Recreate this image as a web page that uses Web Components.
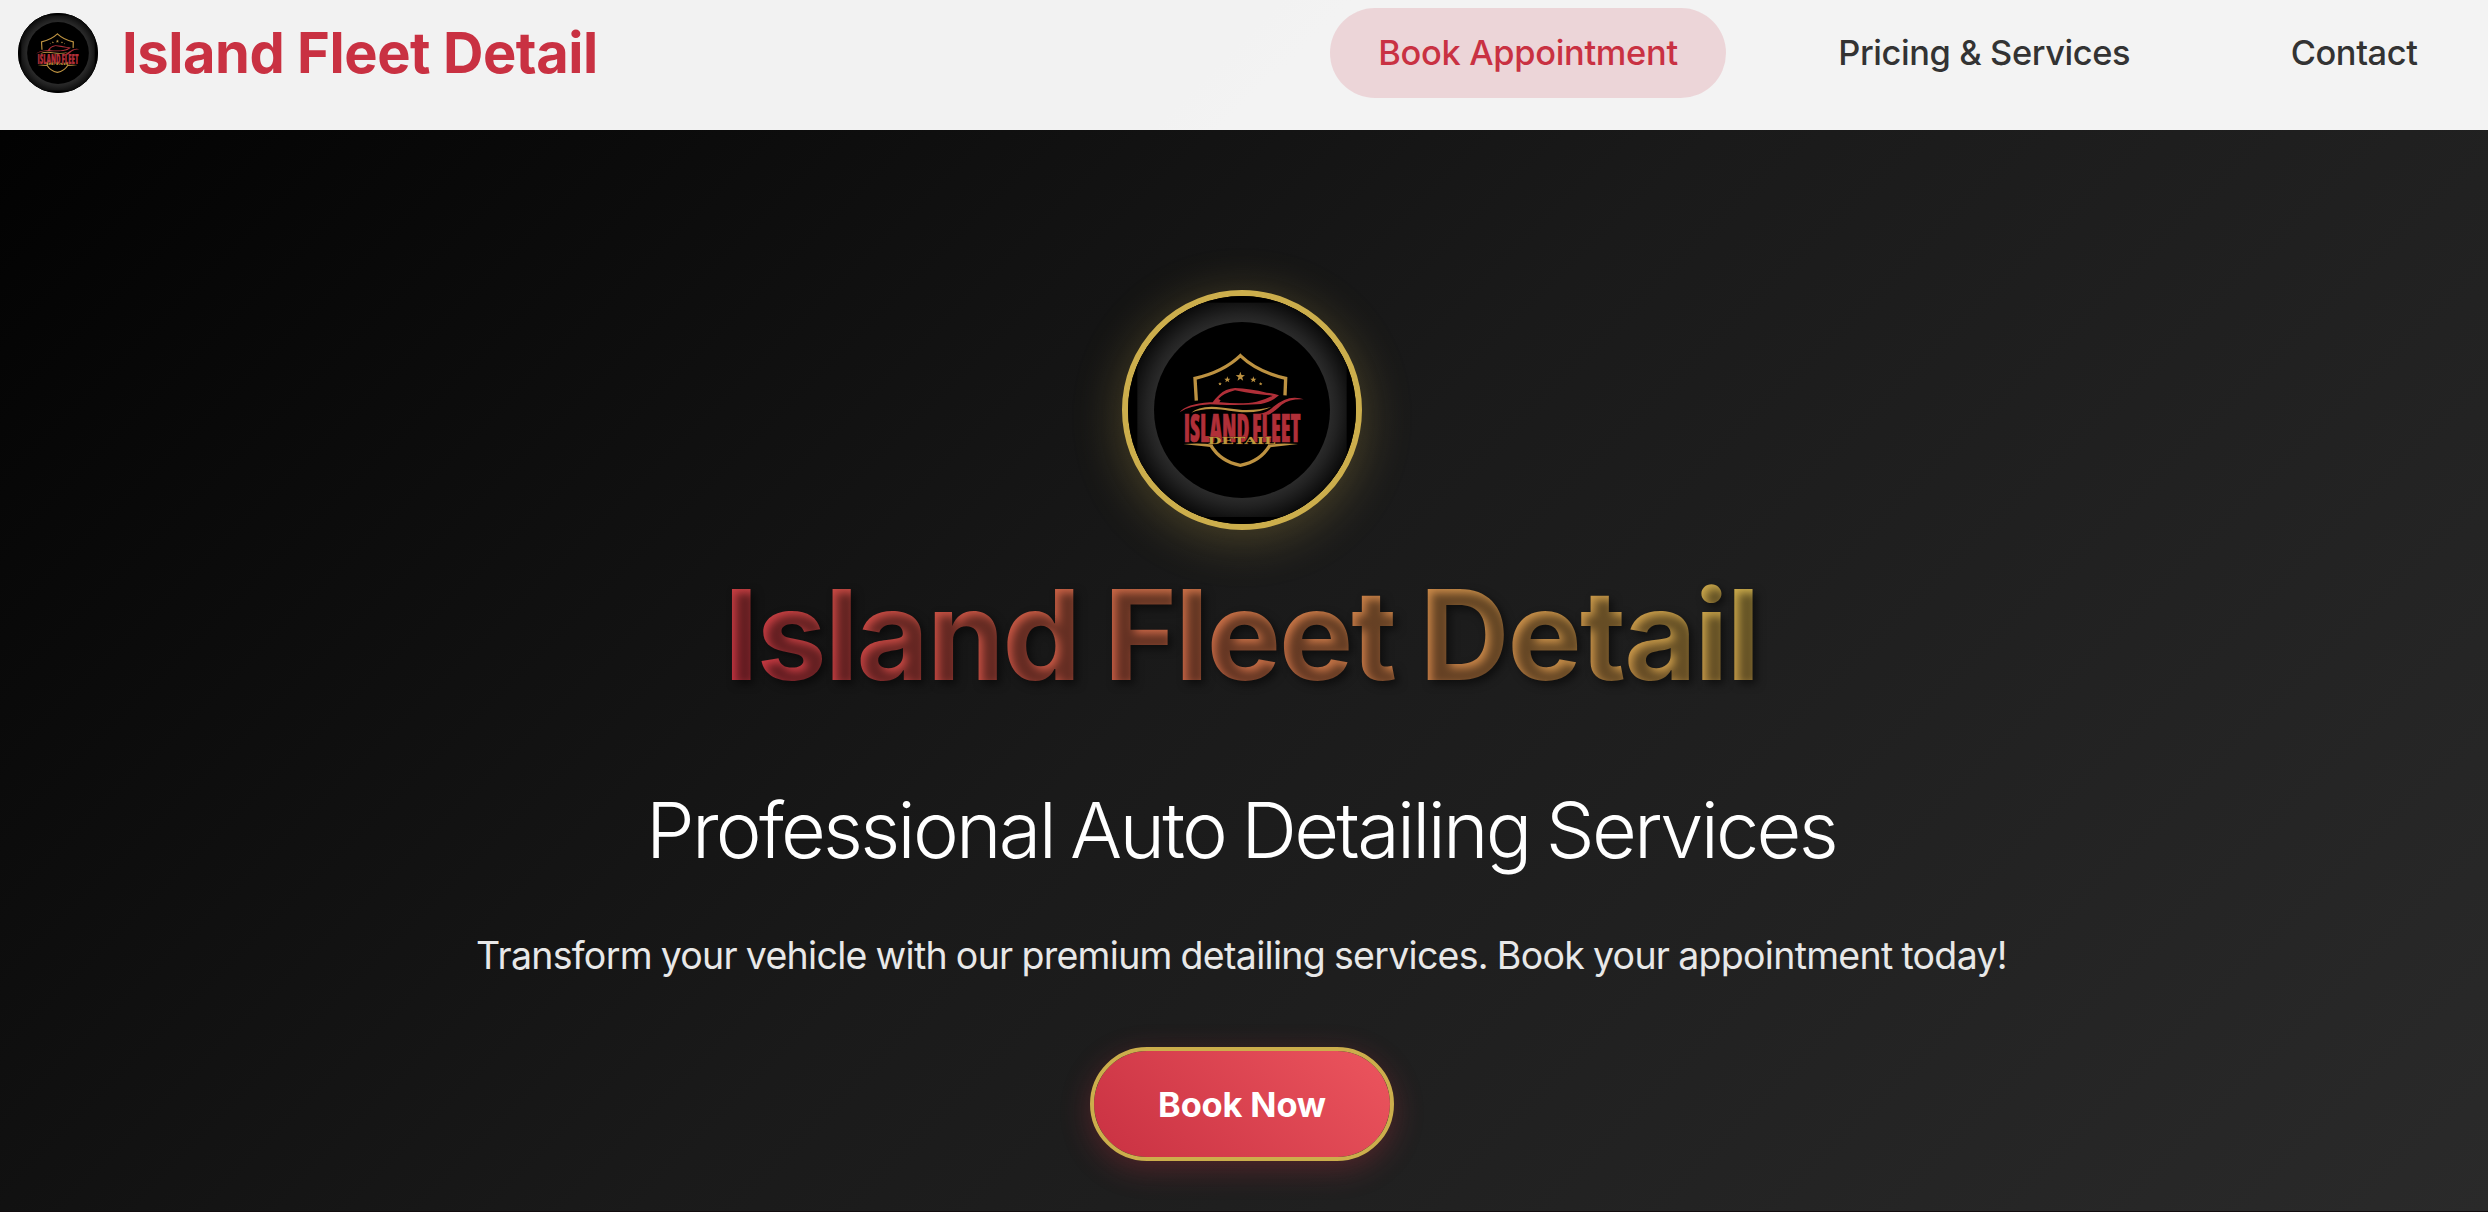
<!DOCTYPE html>
<html lang="en">
<head>
<meta charset="utf-8">
<title>Island Fleet Detail</title>
<style>
  html, body { margin: 0; height: 100%; overflow: hidden; }
  body { font-family: Inter, "Liberation Sans", sans-serif; background: #000; }
</style>
</head>
<body>
<fleet-page></fleet-page>
<script>
const define = (name, html) => {
  const template = document.createElement('template');
  template.innerHTML = html;
  customElements.define(name, class extends HTMLElement {
    constructor() {
      super();
      this.attachShadow({ mode: 'open' }).append(template.content.cloneNode(true));
    }
  });
};

define('fleet-emblem', `
<style>
  :host { display: block; box-sizing: border-box; border-radius: 50%; overflow: hidden; background: #000; flex: none; }
  svg { display: block; width: 100%; height: 100%; }
  .wordmark { font-family: "Open Sans", "Noto Sans", sans-serif; font-weight: 800; font-stretch: 75%; font-size: 115px; }
</style>
<svg viewBox="84 78 684 684">
  <defs>
    <radialGradient id="ring" gradientUnits="userSpaceOnUse" cx="426" cy="420" r="364">
      <stop offset="0.72" stop-color="#2b2b2b"/>
      <stop offset="0.79" stop-color="#222"/>
      <stop offset="0.92" stop-color="#0d0d0d"/>
      <stop offset="1" stop-color="#000"/>
    </radialGradient>
  </defs>
  <rect x="84" y="78" width="684" height="684" fill="#000"/>
  <rect x="112" y="98" width="628" height="643" fill="url(#ring)"/>
  <circle cx="426" cy="420" r="264" fill="#000"/>
  <g fill="none" stroke="#bd9241" stroke-width="10">
    <path d="M289 392 L285 325 Q370 306 421 257 Q472 306 557 325 L555 376"/>
    <path d="M333 527 Q362 575 421 586 Q480 575 509 527"/>
  </g>
  <g fill="#bd9241">
    <path d="M250 522 Q300 519 338 523 L338 532 Q300 528 250 522Z"/>
    <path d="M594 522 Q544 519 504 523 L504 532 Q544 528 594 522Z"/>
    <path d="M421 305 L424.500 315 L435 315.500 L426.700 322 L429.500 332 L421 326 L412.500 332 L415.300 322 L407 315.500 L417.500 315Z"/>
    <path d="M382 319 L384.500 326 L391 326.500 L386 330.500 L388 337 L382 333 L376 337 L378 330.500 L373 326.500 L379.500 326Z"/>
    <path d="M460 319 L462.500 326 L469 326.500 L464 330.500 L466 337 L460 333 L454 337 L456 330.500 L451 326.500 L457.500 326Z"/>
    <path d="M360 336 l1.500 3.500 l3.500 .5 l-2.500 2.500 l1 3.500 l-3.500 -2 l-3.500 2 l1 -3.500 l-2.500 -2.500 l3.500 -.5Z"/>
    <path d="M482 336 l1.500 3.500 l3.500 .5 l-2.500 2.500 l1 3.500 l-3.500 -2 l-3.500 2 l1 -3.500 l-2.500 -2.500 l3.500 -.5Z"/>
    <path d="M274 428 Q292 411 335 410 C375 411 405 420 440 420 Q480 420 514 411 Q482 427 440 427 C400 427 375 417 335 417 Q300 417 274 428Z"/>
  </g>
  <g fill="#b02f38">
    <path d="M239 427 Q258 402 330 397 Q350 396 362 397 Q430 403 470 395 Q495 389 518 377 Q470 374 405 361 Q370 370 355 387 L362 391 L358 397 L338 397 Q344 387 358 374 Q376 356 405 354 Q450 356 500 368 Q520 370 537 376 Q510 400 470 403 Q410 406 362 404 L330 403 Q265 407 239 427Z"/>
    <path d="M478 432 Q505 426 520 410 Q555 382 585 383 Q600 384 611 388 Q570 386 545 404 Q520 428 505 434Z"/>
    <g class="wordmark" stroke="#b02f38" stroke-width="2">
      <text x="251" y="515" textLength="197" lengthAdjust="spacingAndGlyphs">ISLAND</text>
      <text x="456" y="515" textLength="146" lengthAdjust="spacingAndGlyphs">FLEET</text>
    </g>
  </g>
  <text x="323" y="521" textLength="203" lengthAdjust="spacingAndGlyphs" font-family="'DejaVu Serif', serif" font-weight="700" font-size="27" fill="#c09a3c" stroke="#4a2512" stroke-width="1" paint-order="stroke">DETAIL</text>
</svg>`);

define('nav-link', `
<style>
  :host { display: block; padding: 0 48.500px; height: 90px; line-height: 90px; border-radius: 50px;
    font-size: 34.4px; font-weight: 500; letter-spacing: -0.4px; color: #333; white-space: nowrap; }
  :host([active]) { background: rgba(201, 49, 66, .15); color: #c93142; letter-spacing: -0.3px; }
</style>
<slot></slot>`);

define('site-header', `
<style>
  :host { display: flex; align-items: center; justify-content: space-between; box-sizing: border-box;
    height: 130px; padding: 0 22px 24px 18px; background: rgba(255, 255, 255, .95); }
  .brand { display: flex; align-items: center; gap: 24px; }
  fleet-emblem { width: 80px; height: 80px; }
  .name { font-size: 56px; font-weight: 700; letter-spacing: -0.444px; line-height: 70px; color: #c93142; white-space: nowrap; }
  nav { display: flex; gap: 63.500px; }
</style>
<div class="brand"><fleet-emblem></fleet-emblem><div class="name">Island Fleet Detail</div></div>
<nav>
  <nav-link active>Book Appointment</nav-link>
  <nav-link>Pricing &amp; Services</nav-link>
  <nav-link>Contact</nav-link>
</nav>`);

define('book-button', `
<style>
  :host { display: flex; align-items: center; justify-content: center; box-sizing: border-box; width: 304px; height: 114px;
    border: 4px solid #ccae4c; border-radius: 57px; background: linear-gradient(45deg, #c93142, #ec555e) padding-box;
    box-shadow: 0 8px 30px rgba(201, 49, 66, .3); color: #fff; font-size: 34.4px; font-weight: 680; letter-spacing: -0.15px; white-space: nowrap; }
</style>
<slot></slot>`);

define('hero-section', `
<style>
  :host { display: flex; flex-direction: column; align-items: center; box-sizing: border-box; height: 1081px; padding: 160px 4px 0 0; }
  fleet-emblem { width: 240px; height: 240px; border: 6px solid #ccae4c; box-shadow: 0 8px 50px rgba(204, 174, 76, .3); }
  h1, h2, p { margin: 0; white-space: nowrap; }
  h1 { margin: 35px 2px 0 0; font-size: 124.7px; font-weight: 700; line-height: 140px; letter-spacing: -1.98px; word-spacing: -3px;
    background: linear-gradient(45deg, #c93142, #ccb04c); -webkit-background-clip: text; background-clip: text;
    -webkit-text-fill-color: transparent; text-shadow: 4px 4px 8px rgba(0, 0, 0, .5); }
  h2 { margin: 80px 2px 0 0; font-size: 77.4px; font-weight: 320; line-height: 90px; letter-spacing: -2.72px; word-spacing: -3px; color: #fff; }
  p { margin: 51px 1px 0 0; font-size: 37.5px; line-height: 60px; letter-spacing: -0.7px; word-spacing: -1px; color: #e8e8e8; }
  book-button { margin-top: 61px; }
</style>
<fleet-emblem></fleet-emblem>
<h1>Island Fleet Detail</h1>
<h2>Professional Auto Detailing Services</h2>
<p>Transform your vehicle with our premium detailing services. Book your appointment today!</p>
<book-button>Book Now</book-button>`);

define('fleet-page', `
<style>
  :host { display: block; height: 1211px; background: linear-gradient(135deg, #000 0%, #1a1a1a 50%, #2a2a2a 100%); border-bottom: 1px solid #120c0e; }
</style>
<site-header></site-header>
<hero-section></hero-section>`);
</script>
</body>
</html>
